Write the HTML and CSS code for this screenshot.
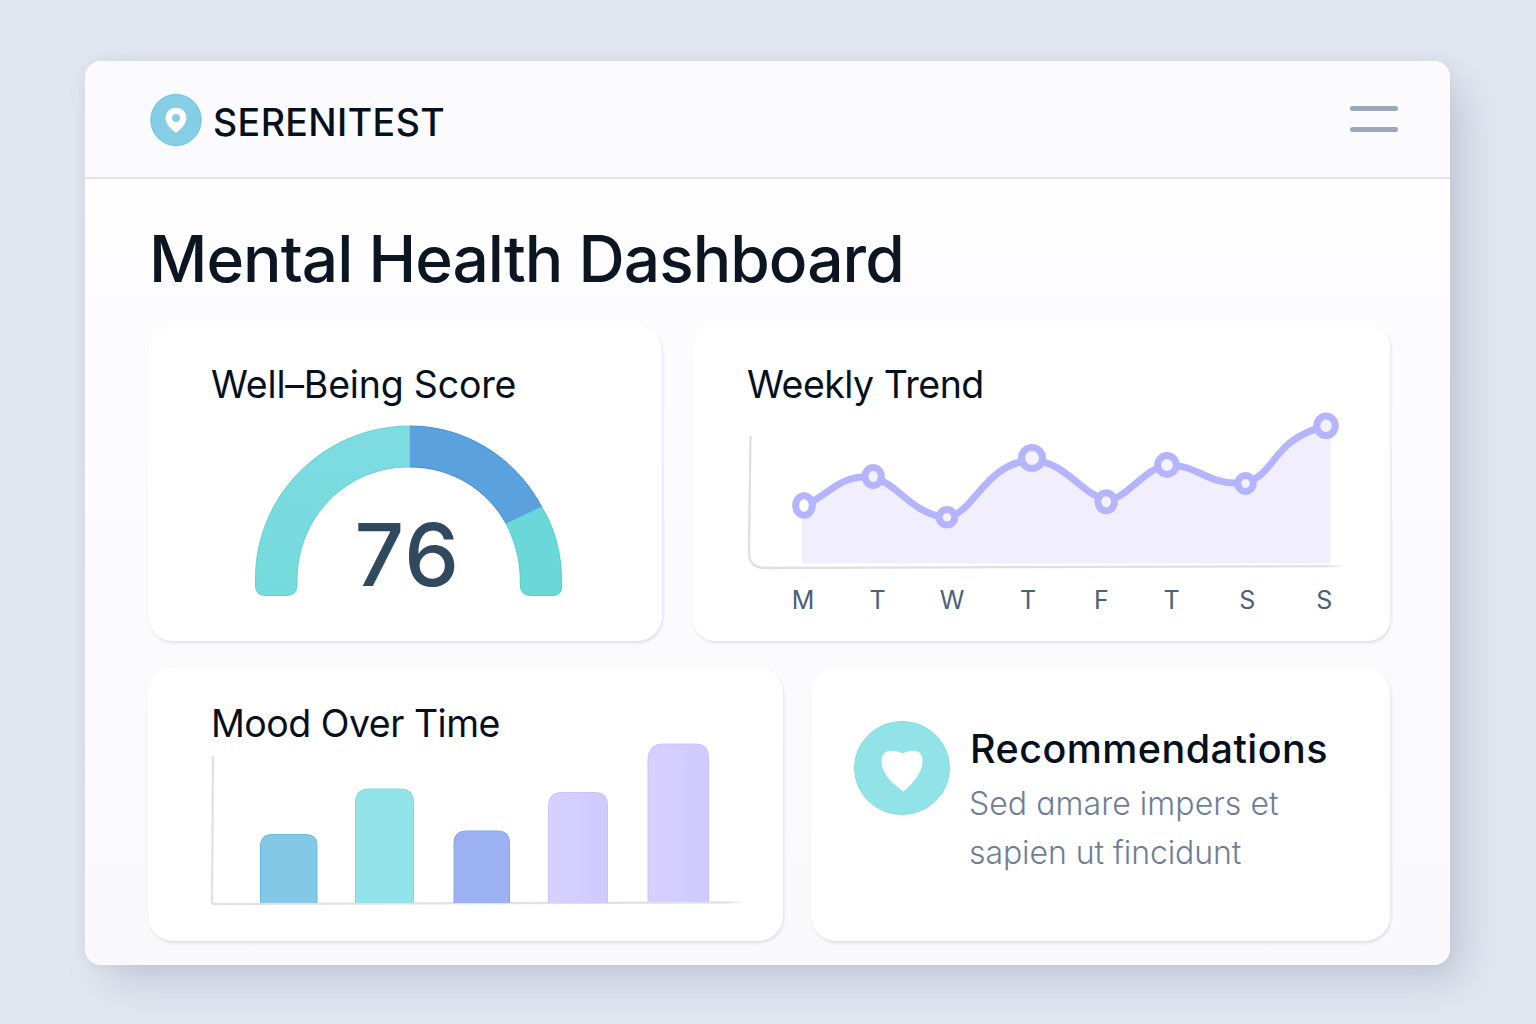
FILE: index.html
```html
<!DOCTYPE html>
<html lang="en">
<head>
<meta charset="utf-8">
<title>Serenitest – Mental Health Dashboard</title>
<link rel="stylesheet" href="styles.css">
</head>
<body>
<div class="window">
  <header class="header">
    <div class="brand">
      <svg class="brand-mark" width="52" height="52" viewBox="0 0 52 52" aria-hidden="true">
        <ellipse cx="26" cy="26" rx="25.2" ry="25.6" fill="#86cee5" stroke="#6cc5e2"/>
        <path fill="#fff" fill-rule="evenodd" d="M26 13.8C20 13.8 15.6 18 15.6 23.8C15.6 29.6 19.5 33.4 24.2 37.5Q26 39.3 27.8 37.5C32.500 33.400 36.400 29.600 36.400 23.800C36.400 18 32 13.800 26 13.800ZM26 19.900A4 4 0 1 1 26 27.900A4 4 0 1 1 26 19.900Z"/>
      </svg>
      <span class="brand-name">SERENITEST</span>
    </div>
    <button class="menu" aria-label="Menu"><span class="menu-line"></span><span class="menu-line"></span></button>
  </header>
  <main class="main">
    <h1 class="title">Mental Health Dashboard</h1>
    <div class="row row-top">
      <section class="card score">
        <h2 class="card-title t-score">Well–Being Score</h2>
        <svg class="chart" width="514" height="237" viewBox="148 404 514 237">
          <defs>
            <linearGradient id="teal" x1="0" y1="0" x2="0" y2="1"><stop offset="0" stop-color="#7edce1"/><stop offset="1" stop-color="#75dadd"/></linearGradient>
          </defs>
          <path fill="url(#teal)" stroke="#5fd3d6" d="M410 426V467C347 466 297 517 297 580V585Q296.500 595.500 287 595.500H265Q255.500 595.500 255.500 586V579C255.500 494 325 426 410 426Z"/>
          <path fill="#6ad7d9" stroke="#4fcfd1" d="M541.500 506.500C555 528 561.500 555 561.500 580V587Q561.500 595.500 552.500 595.500H531Q520.500 595.500 520.300 585V580C520.300 560 515 541 506 523.500Z"/>
          <path fill="#5ba1de" d="M410 426C465 426 515 457 541.500 506.500L506 523.500C487 489 451 467 410 467Z"/>
          <path fill="none" stroke="#3f90dc" d="M410 426C465 426 515 457 541.500 506.500M506 523.500C487 489 451 467 410 467"/>
          <text class="score-value" x="407.500" y="585.500" text-anchor="middle">76</text>
        </svg>
      </section>
      <section class="card trend">
        <h2 class="card-title t-trend">Weekly Trend</h2>
        <svg class="chart" width="697" height="237" viewBox="693 404 697 237">
          <defs>
            <linearGradient id="axis-x" gradientUnits="userSpaceOnUse" x1="1325" y1="0" x2="1346" y2="0"><stop offset="0" stop-color="#dfdfe5"/><stop offset="1" stop-color="#dfdfe5" stop-opacity="0"/></linearGradient>
          </defs>
          <path fill="#f1effe" d="M802 506C825 494 845 477 873 477C898 477 913 517 947 517C973 517 990 459 1032 459C1070 459 1085 501 1106 501C1128 501 1140 465 1167 465C1195 465 1211 483 1245 483C1279 483 1275 431 1330.500 426V563.500H802Z"/>
          <path fill="none" stroke="url(#axis-x)" stroke-width="2.300" d="M750.500 436L749 553Q749 568 766 568L1346 566.200"/>
          <path fill="none" stroke="#b5b4fe" stroke-width="7" d="M804 505.500C825 498 838 477 864 477C897 477 905 512 947 518C975 512 985 463 1032 460C1066 462 1080 493 1106 500C1128 500 1144 466 1170 465C1195 465 1208 483 1235 483C1278 483 1265 441 1326 426"/>
          <g fill="#f4f2ff" stroke="#b5b4fe">
            <ellipse cx="804" cy="505.500" rx="8.300" ry="9.800" stroke-width="7" fill="#fff"/>
            <ellipse cx="873.200" cy="476.500" rx="8.200" ry="9" stroke-width="7"/>
            <ellipse cx="947" cy="517.300" rx="7.800" ry="7.800" stroke-width="7"/>
            <ellipse cx="1032" cy="458" rx="10.500" ry="10.500" stroke-width="7"/>
            <ellipse cx="1106.200" cy="501.700" rx="8.300" ry="9" stroke-width="7"/>
            <ellipse cx="1167" cy="465" rx="9.400" ry="9.400" stroke-width="7"/>
            <ellipse cx="1245.500" cy="483.500" rx="7.700" ry="8" stroke-width="7"/>
            <ellipse cx="1326" cy="425.800" rx="9.300" ry="9.800" stroke-width="7"/>
          </g>
          <g class="day" text-anchor="middle">
            <text x="803" y="608.500">M</text><text x="877.500" y="608.500">T</text><text x="952" y="608.500">W</text><text x="1028" y="608.500">T</text><text x="1101.500" y="608.500">F</text><text x="1171.500" y="608.500">T</text><text x="1247.300" y="608.500">S</text><text x="1324.300" y="608.500">S</text>
          </g>
        </svg>
      </section>
    </div>
    <div class="row row-bottom">
      <section class="card mood">
        <h2 class="card-title t-mood">Mood Over Time</h2>
        <svg class="chart" width="635" height="198" viewBox="148 743 635 198">
          <defs>
            <linearGradient id="lilac"><stop offset="0" stop-color="#d6d1fe"/><stop offset=".4" stop-color="#d3cffe"/><stop offset=".8" stop-color="#cfcbff"/><stop offset="1" stop-color="#cfcbff"/></linearGradient>
            <linearGradient id="mood-axis" gradientUnits="userSpaceOnUse" x1="728" y1="0" x2="745" y2="0"><stop offset="0" stop-color="#e1e1e7"/><stop offset="1" stop-color="#e1e1e7" stop-opacity="0"/></linearGradient>
          </defs>
          <path fill="none" stroke="url(#mood-axis)" stroke-width="2.300" d="M213 756L212 902Q212 904 214 904L745 902.300"/>
          <path fill="#83c9e7" stroke="#63bde6" d="M260.500 903V846Q260.500 834.500 272 834.500H306Q317 834.500 317 846V903"/>
          <path fill="#92e4ea" stroke="#7adde3" d="M355.500 903V802Q355.500 789 369 789H400.500Q413.500 789 413.500 802V903"/>
          <path fill="#9bb1f1" stroke="#8aa4ee" d="M454 903V843Q454 831 466 831H498Q509.500 831 509.500 843V903"/>
          <path fill="url(#lilac)" stroke="#c8c3fb" d="M548.500 903V806Q548.500 792.500 562 792.500H595Q607.500 792.500 607.500 805V903"/>
          <path fill="url(#lilac)" stroke="#c8c3fb" d="M648 902V760Q648 744 663 744H696Q708.500 744 708.500 757V902"/>
        </svg>
      </section>
      <section class="card recs">
        <svg class="heart" width="96" height="94" viewBox="0 0 96 94" aria-hidden="true">
          <ellipse cx="48" cy="47" rx="47.500" ry="46.500" fill="#92e3e7" stroke="#80dfe3"/>
          <path fill="#fff" d="M48.500 32Q46.500 32 45 31C37 28.500 27.600 29 27.600 40C27.600 52.500 37.500 62 49.500 70.500C59.500 62 68.600 51 68.600 40C68.600 29 60 28.500 52 31Q50.500 32 48.500 32Z"/>
        </svg>
        <div class="recs-body">
          <h2 class="recs-title">Recommendations</h2>
          <p class="recs-text"><span class="line-a">Sed <span class="round-a">a</span>mare impers et</span><br><span class="line-b">sapien ut fincidunt</span></p>
        </div>
      </section>
    </div>
  </main>
</div>
</body>
</html>
```
FILE: styles.css
```css
* { box-sizing: border-box; }

body {
  margin: 0;
  height: 1024px;
  padding: 61px 86px 59px 85px;
  overflow: hidden;
  background: #e1e6f0;
  font-family: Inter, "Liberation Sans", sans-serif;
  color: #06101c;
}

h1, h2, p { margin: 0; }

.window {
  height: 904px;
  border-radius: 16px;
  overflow: hidden;
  background: linear-gradient(#fefefe, #fcfcfe 40%, #f9f9fc);
  box-shadow: 18px 20px 40px -6px rgba(125, 133, 158, .33), 0 0 14px rgba(125, 140, 175, .1);
}

.header {
  display: flex;
  justify-content: space-between;
  align-items: flex-start;
  height: 118px;
  padding: 33px 52px 0 65px;
  border-bottom: 2px solid #e1e2e7;
  background: #fbfbfd;
}

.brand { display: flex; gap: 11px; }
.brand-mark { display: block; }

.brand-name {
  padding-top: 6px;
  font-size: 37.500px;
  line-height: 46px;
  font-weight: 500;
  letter-spacing: .4px;
  white-space: nowrap;
}

.menu {
  display: flex;
  flex-direction: column;
  gap: 16px;
  width: 48px;
  margin-top: 11.500px;
  padding: 0;
  border: 0;
  background: none;
}

.menu-line { width: 48px; height: 5px; border-radius: 3px; background: #9aa8ba; }

.main { padding: 0 60px 0 63px; }

.title {
  height: 147px;
  padding-top: 42px;
  padding-left: 1px;
  font-size: 64px;
  line-height: 76px;
  font-weight: 550;
  letter-spacing: -.950px;
  white-space: nowrap;
  color: #0b1622;
}

.row { display: flex; }
.row-top { gap: 31px; height: 315px; }
.row-bottom { gap: 28px; height: 273px; margin-top: 27px; }

.card {
  border-radius: 25px;
  background: #fff;
  box-shadow: 1px 2px 3px rgba(90, 95, 130, .17);
}

.score { width: 514px; padding-top: 38px; }
.trend { width: 697px; margin-top: -1px; padding-top: 39px; border-radius: 22px; }
.mood { width: 635px; padding-top: 35px; }
.recs { display: flex; gap: 19px; width: 579px; padding: 53px 0 0 43px; }

.card-title {
  height: 40px;
  padding-left: 63px;
  font-size: 37.500px;
  line-height: 42px;
  font-weight: 420;
  white-space: nowrap;
}

.t-score { letter-spacing: -.2px; }
.t-trend { padding-left: 54px; letter-spacing: -.5px; }
.t-mood { letter-spacing: -.5px; }

.chart { display: block; overflow: visible; }

.score-value { font-size: 87px; font-weight: 500; letter-spacing: 1.500px; fill: #30495f; }
.day { font-size: 25px; fill: #4b6079; }

.heart { display: block; }

.recs-title {
  padding-top: 5px;
  padding-left: 1px;
  font-size: 39.500px;
  line-height: 46px;
  font-weight: 550;
  letter-spacing: .450px;
  white-space: nowrap;
}

.recs-text {
  margin-top: 8px;
  font-size: 32px;
  line-height: 48.500px;
  font-weight: 350;
  white-space: nowrap;
  color: #6f7e97;
}

.line-a { letter-spacing: .050px; }
.line-b { letter-spacing: -.080px; }
.round-a { font-feature-settings: "cv11"; }
```
